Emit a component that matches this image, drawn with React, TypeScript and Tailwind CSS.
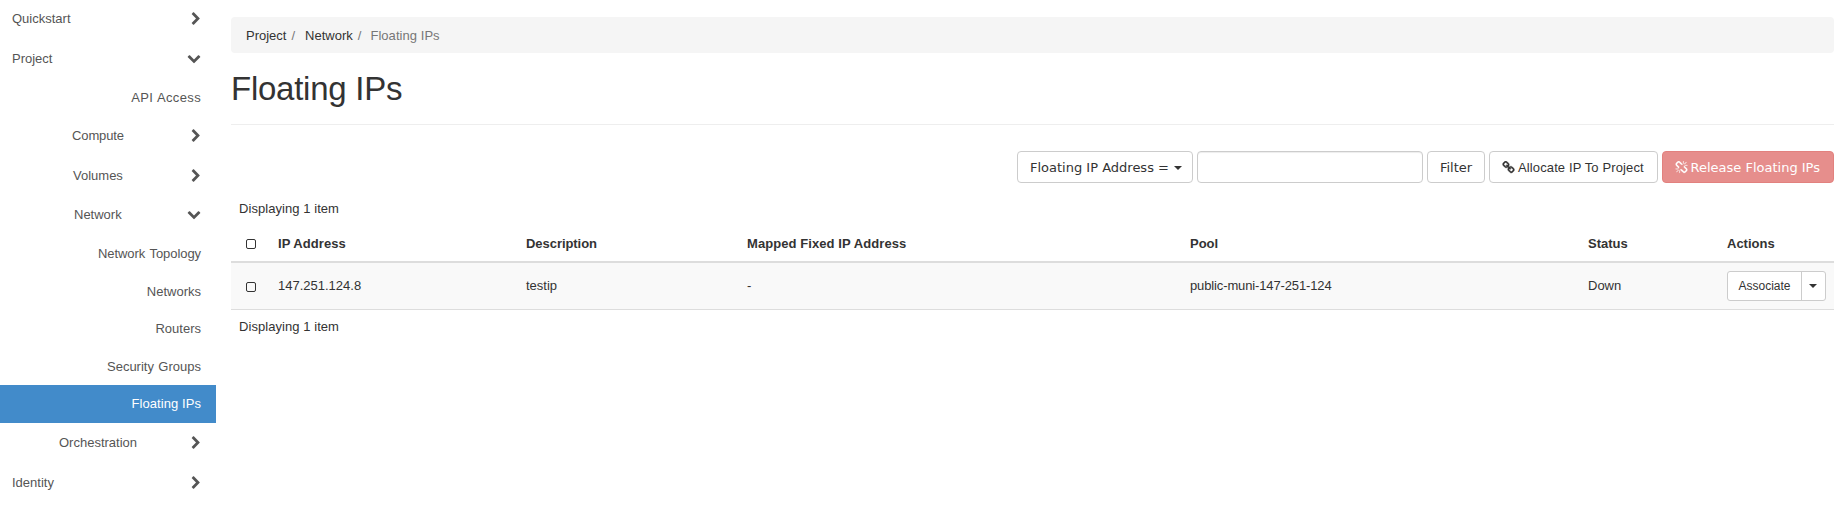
import React from "react";

const CHEVRON_RIGHT =
  "M1363 877l-742 742q-19 19-45 19t-45-19l-166-166q-19-19-19-45t19-45l531-531-531-531q-19-19-19-45t19-45l166-166q19-19 45-19t45 19l742 742q19 19 19 45t-19 45z";
const CHEVRON_DOWN =
  "M1683 808l-742 741q-19 19-45 19t-45-19l-742-741q-19-19-19-45.5t19-45.5l166-165q19-19 45-19t45 19l531 531 531-531q19-19 45-19t45 19l166 165q19 19 19 45.5t-19 45.5z";
const LINK =
  "M1520 1216q0-40-28-68l-208-208q-28-28-68-28-42 0-72 32 3 3 19 18.5t21.5 21.5 15 19 13 25.5 3.5 27.5q0 40-28 68t-68 28q-15 0-27.5-3.5t-25.5-13-19-15-21.5-21.5-18.5-19q-33 31-33 73 0 40 28 68l206 207q27 27 68 27 40 0 68-26l147-146q28-28 28-67zm-703-705q0-40-28-68l-206-207q-28-28-68-28-39 0-68 27l-147 146q-28 28-28 67 0 40 28 68l208 208q27 27 68 27 42 0 72-31-3-3-19-18.5t-21.5-21.5-15-19-13-25.5-3.5-27.5q0-40 28-68t68-28q15 0 27.5 3.5t25.5 13 19 15 21.5 21.5 18.5 19q33-31 33-73zm895 705q0 120-85 203l-147 146q-83 83-203 83-121 0-204-85l-206-207q-83-83-83-203 0-123 88-209l-88-88q-86 88-208 88-120 0-204-84l-208-208q-84-84-84-204t85-203l147-146q83-83 203-83 121 0 204 85l206 207q83 83 83 203 0 123-88 209l88 88q86-88 208-88 120 0 204 84l208 208q84 84 84 204z";
const UNLINK =
  "M503 1271l-256 256q-10 9-23 9-12 0-23-9-9-10-9-23t9-23l256-256q10-9 23-9t23 9q9 10 9 23t-9 23zm169 41v320q0 14-9 23t-23 9-23-9-9-23v-320q0-14 9-23t23-9 23 9 9 23zm-224-224q0 14-9 23t-23 9h-320q-14 0-23-9t-9-23 9-23 23-9h320q14 0 23 9t9 23zm1264 128q0 120-85 203l-147 146q-83 83-203 83-121 0-204-85l-334-335q-21-21-42-56l239-18 273 274q28 28 68 27.5t68-27.5l147-146q28-28 28-67 0-40-28-68l-274-275 18-239q35 21 56 42l336 336q84 86 84 204zm-617-724l-239 18-273-274q-28-28-68-28-39 0-68 27l-147 146q-28 28-28 67 0 40 28 68l274 274-18 240q-35-21-56-42l-336-336q-84-86-84-204 0-120 85-203l147-146q83-83 203-83 121 0 204 85l334 335q21 21 42 56zm633 84q0 14-9 23t-23 9h-320q-14 0-23-9t-9-23 9-23 23-9h320q14 0 23 9t9 23zm-544-544v320q0 14-9 23t-23 9-23-9-9-23v-320q0-14 9-23t23-9 23 9 9 23zm407 151l-256 256q-11 9-23 9t-23-9q-9-10-9-23t9-23l256-256q10-9 23-9t23 9q9 10 9 23t-9 23z";

function Icon({ d, className }: { d: string; className: string }) {
  return (
    <svg viewBox="0 0 1792 1792" fill="currentColor" aria-hidden="true" className={className}>
      <path d={d} />
    </svg>
  );
}

function Caret() {
  return (
    <svg viewBox="0 0 8 4" fill="currentColor" aria-hidden="true" className="h-1 w-2 shrink-0">
      <path d="M0 0h8L4 4z" />
    </svg>
  );
}

type GroupProps = { label: string; open?: boolean; className: string };

function Group({ label, open = false, className }: GroupProps) {
  return (
    <button type="button" className={`flex w-full items-start pt-2.5 text-left ${className}`}>
      <span className="grow">{label}</span>
      {open ? (
        <Icon d={CHEVRON_DOWN} className="mt-px mr-[15px] size-3.5 shrink-0" />
      ) : (
        <Icon d={CHEVRON_RIGHT} className="mt-[1.5px] mr-[13.5px] size-3.5 shrink-0" />
      )}
    </button>
  );
}

type PanelProps = { label: string; active?: boolean; className: string };

function Panel({ label, active = false, className }: PanelProps) {
  return (
    <a
      href="#"
      aria-current={active ? "page" : undefined}
      className={`block pt-2.5 pr-[15px] text-right ${active ? "bg-[#428bca] text-white" : ""} ${className}`}
    >
      {label}
    </a>
  );
}

function Sidebar() {
  return (
    <nav className="w-[216px] shrink-0 text-[#555]">
      <Group label="Quickstart" className="h-10 pl-3" />
      <Group label="Project" open className="h-[39px] pl-3" />
      <Panel label="API Access" className="h-[38px] tracking-[0.35px] [word-spacing:0.5px]" />
      <Group label="Compute" className="h-10 pl-[72px] tracking-[-0.12px]" />
      <Group label="Volumes" className="h-[39px] pl-[73px]" />
      <Group label="Network" open className="h-[39px] pl-[74px]" />
      <Panel label="Network Topology" className="h-[38px] tracking-[-0.07px] [word-spacing:1px]" />
      <Panel label="Networks" className="h-[37px]" />
      <Panel label="Routers" className="h-[38px]" />
      <Panel label="Security Groups" className="h-[37px] [word-spacing:0.8px]" />
      <Panel label="Floating IPs" active className="mb-px h-[38px] tracking-[0.08px]" />
      <Group label="Orchestration" className="h-10 pl-[59px]" />
      <Group label="Identity" className="h-[39px] pl-3" />
    </nav>
  );
}

function Toolbar() {
  return (
    <div className="mt-[26px] flex h-8 justify-end gap-1 font-['DejaVu_Sans',sans-serif]">
      <button type="button" className="flex w-44 items-center rounded-[4px] border border-[#ccc] bg-white pt-0.5 pl-3 whitespace-nowrap">
        <span className="mr-[5px]">Floating IP Address =</span>
        <Caret />
      </button>
      <input
        aria-label="Floating IP Address"
        className="w-[226px] rounded-[4px] border border-[#ccc] bg-white shadow-[inset_0_1px_1px_rgba(0,0,0,0.075)]"
      />
      <button type="button" className="w-[58px] rounded-[4px] border border-[#ccc] bg-white pt-0.5">
        Filter
      </button>
      <button
        type="button"
        className="flex w-[169px] items-center rounded-[4px] border border-[#ccc] bg-white pl-[11.5px] font-['Liberation_Sans',Arial,sans-serif] tracking-[0.12px] whitespace-nowrap"
      >
        <Icon d={LINK} className="mr-[3.5px] size-[13px] stroke-current stroke-[50]" />
        <span className="pt-0.5">Allocate IP To Project</span>
      </button>
      <button
        type="button"
        disabled
        className="flex w-[172px] items-center rounded-[4px] border border-[#d43f3a] bg-[#d9534f] pl-[11.5px] whitespace-nowrap text-white opacity-65"
      >
        <Icon d={UNLINK} className="mr-[3px] size-[13px] stroke-current stroke-[30]" />
        <span className="pt-0.5">Release Floating IPs</span>
      </button>
    </div>
  );
}

function Check({ label }: { label: string }) {
  return (
    <span
      role="checkbox"
      aria-checked="false"
      aria-label={label}
      className="block size-2.5 rounded-[2px] border border-[#333]"
    />
  );
}

const COLUMNS = "grid grid-cols-[39px_248px_221px_443px_398px_139px_115px] items-center";

function AddressTable() {
  return (
    <div role="table">
      <div role="row" className={`${COLUMNS} h-[41px] border-b-2 border-[#ddd] pt-[5px] font-bold`}>
        <div role="columnheader" className="pl-[15px]">
          <Check label="Select all" />
        </div>
        <div role="columnheader" className="pl-2 tracking-[0.06px]">IP Address</div>
        <div role="columnheader" className="pl-2 tracking-[-0.05px]">Description</div>
        <div role="columnheader" className="pl-2 tracking-[0.08px]">Mapped Fixed IP Address</div>
        <div role="columnheader" className="pl-2">Pool</div>
        <div role="columnheader" className="pl-2">Status</div>
        <div role="columnheader" className="pl-2">Actions</div>
      </div>
      <div role="row" className={`${COLUMNS} h-[47px] border-b border-[#ddd] bg-[#f9f9f9]`}>
        <div role="cell" className="pt-0.5 pl-[15px]">
          <Check label="Select 147.251.124.8" />
        </div>
        <div role="cell" className="pl-2">147.251.124.8</div>
        <div role="cell" className="pl-2">testip</div>
        <div role="cell" className="pl-2">-</div>
        <div role="cell" className="pl-2 tracking-[-0.13px]">public-muni-147-251-124</div>
        <div role="cell" className="pl-2">Down</div>
        <div role="cell" className="flex pl-2">
          <div className="flex h-[30px] w-[99px] rounded-[3px] border border-[#ccc] bg-white text-xs">
            <button type="button" className="grow border-r border-[#ccc]">
              Associate
            </button>
            <button type="button" aria-label="More actions" className="flex w-[23px] items-center justify-center pr-px">
              <Caret />
            </button>
          </div>
        </div>
      </div>
    </div>
  );
}

export default function App() {
  return (
    <div className="flex h-[510px] w-[1836px] overflow-hidden bg-white font-['Liberation_Sans',Arial,sans-serif] text-[13px] leading-[18px] text-[#333]">
      <Sidebar />
      <main className="ml-[15px] w-[1603px] pt-[17px]">
        <ol className="flex h-9 items-center rounded-[4px] bg-[#f5f5f5] pt-0.5 pl-[15px]">
          <li>Project</li>
          <li className="pr-[10px] pl-[5px] text-[#777]">/</li>
          <li>Network</li>
          <li className="pr-[9px] pl-[5px] text-[#777]">/</li>
          <li className="tracking-[0.05px] text-[#777]">Floating IPs</li>
        </ol>
        <h1 className="mt-[18px] h-[54px] border-b border-[#eee] text-[33px] leading-9 tracking-[-0.25px]">Floating IPs</h1>
        <Toolbar />
        <p className="mt-[17px] h-[22px] pl-2 tracking-[0.06px]">Displaying 1 item</p>
        <AddressTable />
        <p className="mt-2 pl-2 tracking-[0.06px]">Displaying 1 item</p>
      </main>
    </div>
  );
}
